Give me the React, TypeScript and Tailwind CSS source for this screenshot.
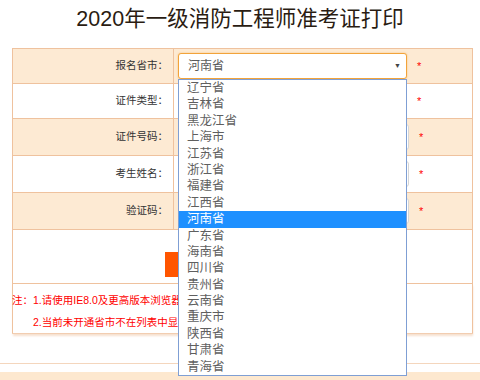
import { ChevronDown } from "lucide-react";

const provinces = [
  "辽宁省",
  "吉林省",
  "黑龙江省",
  "上海市",
  "江苏省",
  "浙江省",
  "福建省",
  "江西省",
  "河南省",
  "广东省",
  "海南省",
  "四川省",
  "贵州省",
  "云南省",
  "重庆市",
  "陕西省",
  "甘肃省",
  "青海省",
];

const rows = [
  { label: "报名省市：", h: "h-[35px]", bg: "bg-[#fdead3]", kind: "select" },
  { label: "证件类型：", h: "h-[35px]", bg: "bg-white", kind: "select" },
  { label: "证件号码：", h: "h-[37px]", bg: "bg-[#fdead3]", kind: "input" },
  { label: "考生姓名：", h: "h-[37px]", bg: "bg-white", kind: "input" },
  { label: "验证码：", h: "h-[37px]", bg: "bg-[#fdead3]", kind: "input" },
];

function Star() {
  return <span className="ml-[10px] text-[11px] leading-none text-[#ff0000]">*</span>;
}

export default function App() {
  const font = { fontFamily: '"Liberation Sans", "Noto Sans CJK SC", sans-serif' };

  return (
    <div className="relative w-[480px] h-[380px] overflow-hidden bg-white" style={font}>
      {/* Title */}
      <h1 className="h-[48px] pt-[5px] text-center text-[21.5px] leading-[28px] text-[#2a1c12]">
        2020年一级消防工程师准考证打印
      </h1>

      {/* Form table */}
      <table className="ml-[12px] w-[461px] border-collapse text-[10.5px] text-[#333]">
        <tbody>
          {rows.map((row, i) => (
            <tr key={row.label} className={`${row.h} ${row.bg}`}>
              <td className="w-[161px] border border-[#efc29e] pr-[5px] text-right">{row.label}</td>
              <td className="border border-[#efc29e] pl-[4px]">
                <div className="flex items-center">
                  {i === 0 ? (
                    <div className="flex h-[26px] w-[229px] items-center justify-between rounded-[3px] border border-[#f2a33a] bg-white pl-[9px] pr-[5px] text-[12px] text-[#5a5a5a] shadow-[0_0_2px_#f7c27a]">
                      <span>河南省</span>
                      <span className="text-[7px] text-[#444]">▼</span>
                    </div>
                  ) : row.kind === "select" ? (
                    <div className="flex h-[26px] w-[229px] items-center justify-between rounded-[3px] border border-[#ccc] bg-white px-[6px]">
                      <span />
                      <ChevronDown size={10} />
                    </div>
                  ) : (
                    <div className="h-[26px] w-[231px] rounded-[3px] border border-[#d6d6d6] bg-white" />
                  )}
                  <Star />
                </div>
              </td>
            </tr>
          ))}
          <tr className="h-[54px] bg-white">
            <td colSpan={2} className="border border-[#efc29e] align-top">
              <button className="ml-[152px] mt-[22px] block h-[25px] w-[80px] bg-[#ff5500]" aria-label="打印" />
            </td>
          </tr>
          <tr className="h-[44px] bg-white">
            <td
              colSpan={2}
              className="border border-[#efc29e] border-b-[#f2cdb0] align-top pt-[5px] text-[10.5px] leading-[22px] text-[#ff0000] shadow-[0_2px_2px_#f6e0cf]"
            >
              <p className="-ml-[1px] whitespace-nowrap">注：1.请使用IE8.0及更高版本浏览器，</p>
              <p className="pl-[20px] whitespace-nowrap">2.当前未开通省市不在列表中显示。</p>
            </td>
          </tr>
        </tbody>
      </table>

      {/* Bottom bands */}
      <div className="mt-[29px] h-px bg-[#f4d6bd]" />
      <div className="mt-[8px] h-[20px] bg-[#fde8cf]" />

      {/* Open select list */}
      <ul className="absolute left-[178px] top-[79px] w-[229px] border border-[#7f9fd4] bg-white text-[12.5px] text-[#5f5f5f]">
        {provinces.map((p, i) => (
          <li
            key={p}
            className={`h-[16.4px] pl-[8px] leading-[16.4px] ${i === 8 ? "bg-[#1e90ff] text-white" : ""}`}
          >
            {p}
          </li>
        ))}
      </ul>
    </div>
  );
}
